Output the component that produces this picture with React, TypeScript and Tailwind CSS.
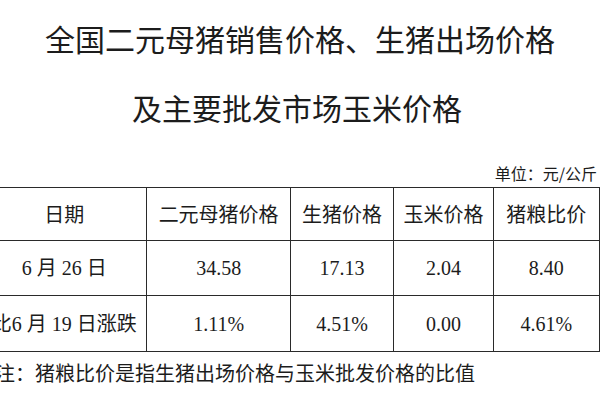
import React from "react";

const rows = [
  ["6 月 26 日", "34.58", "17.13", "2.04", "8.40"],
  ["比6 月 19 日涨跌", "1.11%", "4.51%", "0.00", "4.61%"],
];

const headers = ["日期", "二元母猪价格", "生猪价格", "玉米价格", "猪粮比价"];
const widths = ["w-[166px]", "w-[146px]", "w-[105px]", "w-[101px]", "w-[108px]"];

export default function App() {
  return (
    <div className="w-[600px] h-[400px] overflow-hidden bg-white text-[#1c1c1c]">
      <div className="font-['Noto_Sans_CJK_SC',sans-serif] text-[30px] text-center">
        <div className="pt-[18px] leading-[40px]">全国二元母猪销售价格、生猪出场价格</div>
        <div className="mt-[29px] leading-[40px] pr-[6px]">及主要批发市场玉米价格</div>
      </div>

      <div className="mt-[36px] pr-[3px] text-right text-[16px] leading-[20px] font-['Noto_Sans_CJK_SC',sans-serif]">
        单位：元/公斤
      </div>

      <table className="mt-[4px] ml-[-19px] border-collapse table-fixed font-['Liberation_Serif','Noto_Sans_CJK_SC',serif] text-[20px]">
        <thead>
          <tr className="h-[53px]">
            {headers.map((h, i) => (
              <th
                key={h}
                className={`${widths[i]} border border-[#2a2a2a] font-normal text-center font-['Noto_Sans_CJK_SC',sans-serif]`}
              >
                {h}
              </th>
            ))}
          </tr>
        </thead>
        <tbody>
          {rows.map((r, ri) => (
            <tr key={ri} className={ri === 0 ? "h-[55px]" : "h-[56px]"}>
              {r.map((c, ci) => (
                <td key={ci} className="border border-[#2a2a2a] text-center whitespace-pre p-0">
                  {c}
                </td>
              ))}
            </tr>
          ))}
        </tbody>
      </table>

      <div className="mt-[7px] ml-[-5px] text-[20px] leading-[28px] font-['Noto_Sans_CJK_SC',sans-serif] whitespace-nowrap">
        注：猪粮比价是指生猪出场价格与玉米批发价格的比值
      </div>
    </div>
  );
}
